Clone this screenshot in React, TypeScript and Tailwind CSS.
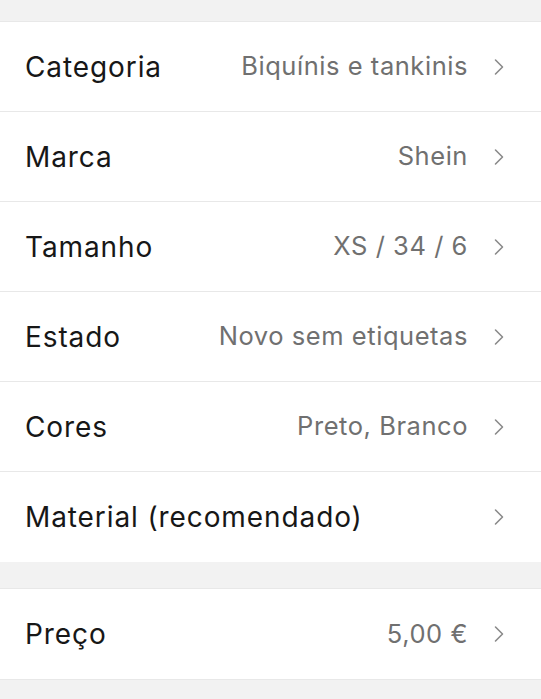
import React from "react"

const rows = [
  { label: "Categoria", value: "Biquínis e tankinis" },
  { label: "Marca", value: "Shein" },
  { label: "Tamanho", value: "XS / 34 / 6" },
  { label: "Estado", value: "Novo sem etiquetas" },
  { label: "Cores", value: "Preto, Branco" },
  { label: "Material (recomendado)", value: "" },
]

function Chevron() {
  return (
    <svg width="12" height="18" viewBox="0 0 12 18" fill="none" className="shrink-0">
      <path d="M2.5 2 L9.5 9 L2.5 16" stroke="#8a8a8a" strokeWidth="1.6" strokeLinecap="round" strokeLinejoin="round" />
    </svg>
  )
}

function Row({ label, value, last }: { label: string; value: string; last?: boolean }) {
  return (
    <div className={`flex h-[90px] items-center pl-[25px] pr-[36px] ${last ? "" : "border-b border-[#e8e8e8]"}`}>
      <span className="flex-1 text-[28px] tracking-[0.9px] text-[#171717]">{label}</span>
      {value && <span className="mr-[25px] text-[25.5px] tracking-[0.55px] text-[#707070]">{value}</span>}
      <Chevron />
    </div>
  )
}

export default function App() {
  return (
    <div className="min-h-[699px] bg-[#f2f2f2] pt-[21px]" style={{ fontFamily: "Inter, 'Liberation Sans', sans-serif" }}>
      <div className="border-t border-[#e8e8e8] bg-white">
        {rows.map((r, i) => (
          <Row key={r.label} label={r.label} value={r.value} last={i === rows.length - 1} />
        ))}
      </div>
      <div className="mt-[26px] border-y border-[#e8e8e8] bg-white">
        <Row label="Preço" value="5,00 €" last />
      </div>
    </div>
  )
}
